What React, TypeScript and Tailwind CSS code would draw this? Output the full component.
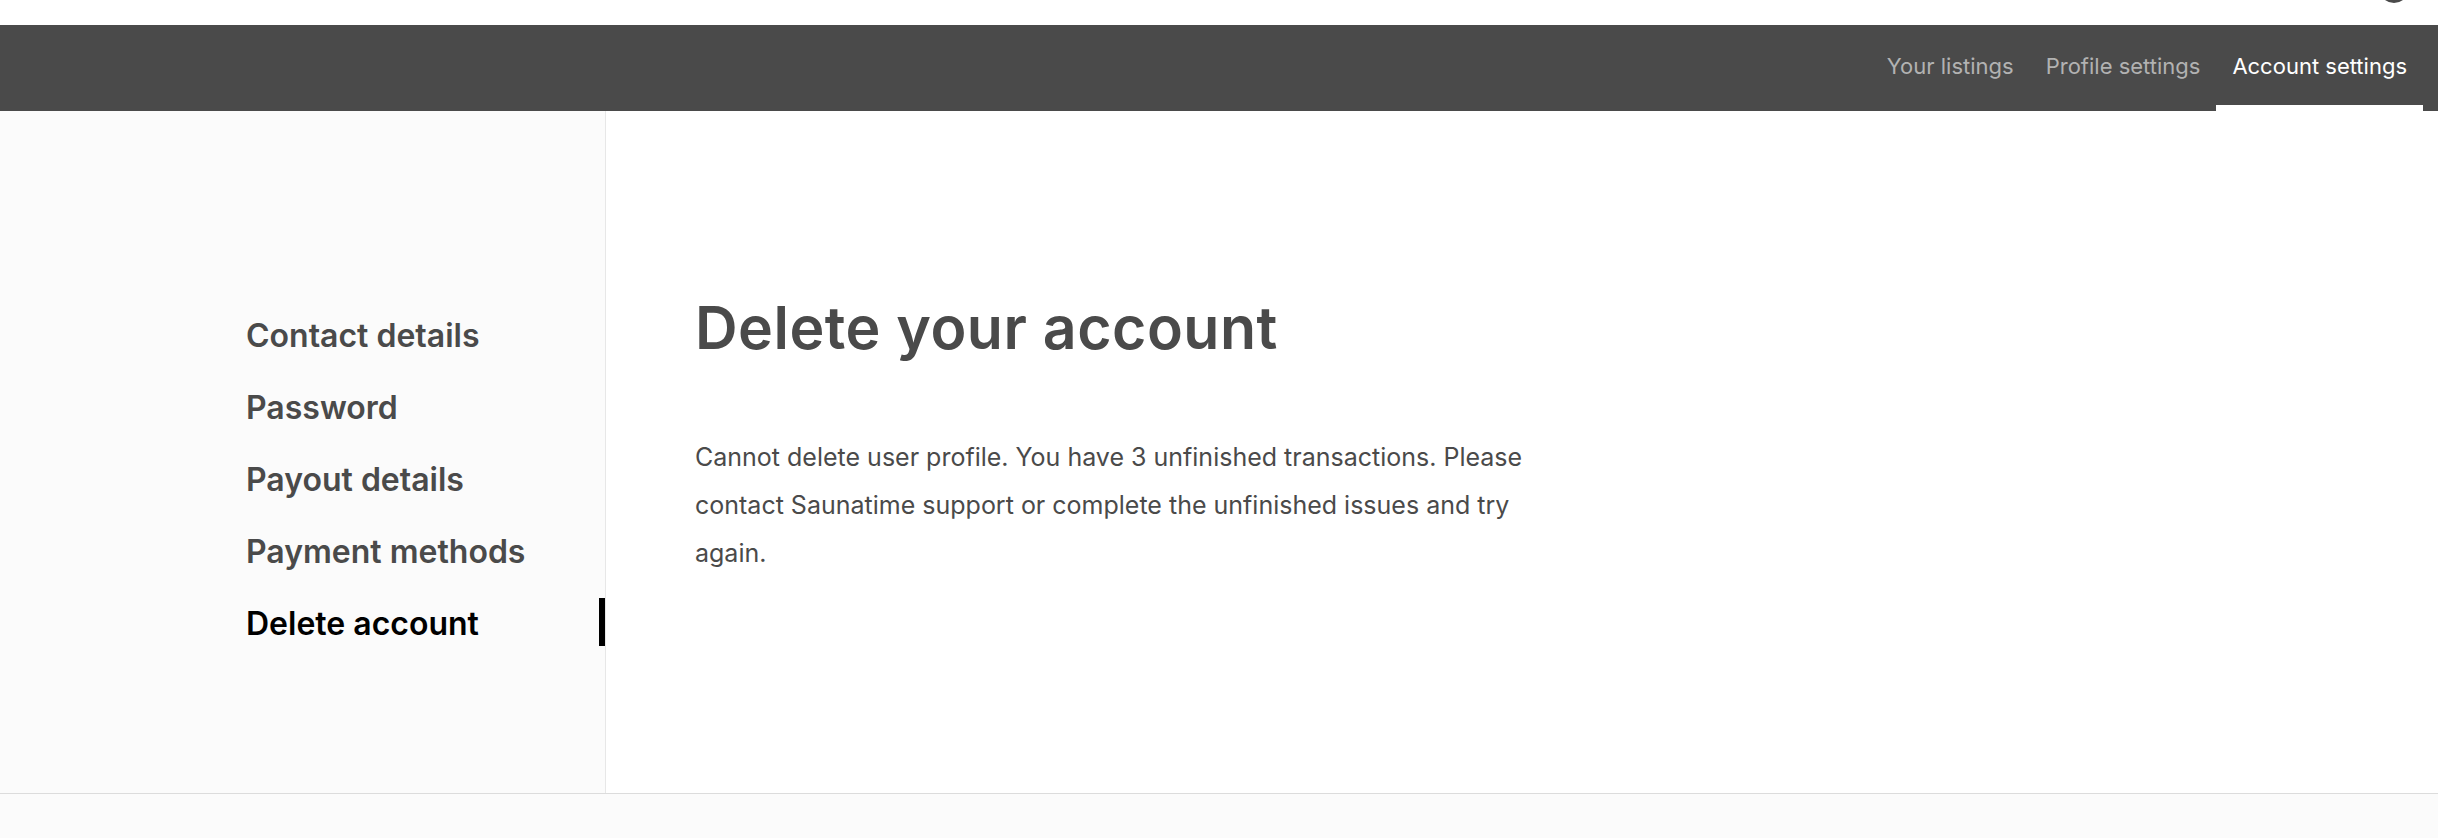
import React from "react";

const tabs = [
  { label: "Your listings", active: false },
  { label: "Profile settings", active: false },
  { label: "Account settings", active: true },
];

const sideItems = [
  { label: "Contact details", active: false },
  { label: "Password", active: false },
  { label: "Payout details", active: false },
  { label: "Payment methods", active: false },
  { label: "Delete account", active: true },
];

export default function App() {
  return (
    <div className="min-h-screen bg-[#fbfbfb] font-['Inter','Noto_Sans',sans-serif] overflow-hidden">
      <div className="relative h-[25px] bg-white">
        <div className="absolute right-[29px] top-[-27px] h-[30px] w-[30px] rounded-full bg-[#4a4a4a]" />
      </div>
      <nav className="flex h-[86px] justify-end bg-[#4a4a4a] pr-[15px]">
        {tabs.map((t) => (
          <div
            key={t.label}
            className={
              t.active
                ? "relative flex items-center px-4 pb-1 text-[22px] text-white"
                : "relative flex items-center px-4 pb-1 text-[22px] text-[#b2b2b2]"
            }
          >
            {t.label}
            {t.active && <div className="absolute bottom-0 left-0 right-0 h-[6px] bg-white" />}
          </div>
        ))}
      </nav>
      <main className="flex h-[682px] bg-white">
        <aside className="flex w-[606px] shrink-0 flex-col gap-6 border-r border-[#e7e7e7] bg-[#fbfbfb] pt-[201px]">
          {sideItems.map((s) => (
            <div
              key={s.label}
              className={
                s.active
                  ? "relative flex h-12 items-center pl-[246px] text-[32px] font-semibold text-black"
                  : "relative flex h-12 items-center pl-[246px] text-[32px] font-semibold text-[#4a4a4a]"
              }
            >
              {s.label}
              {s.active && <div className="absolute right-0 top-[-2px] h-[48px] w-[6px] bg-black" />}
            </div>
          ))}
        </aside>
        <section className="flex-1 pl-[89px] pt-[187px]">
          <h1 className="text-[59px] leading-[60px] font-semibold tracking-[0.5px] text-[#4a4a4a]">
            Delete your account
          </h1>
          <p className="mt-[75px] max-w-[860px] text-[25px] leading-[48px] text-[#4a4a4a]">
            Cannot delete user profile. You have 3 unfinished transactions. Please contact Saunatime support or
            complete the unfinished issues and try again.
          </p>
        </section>
      </main>
      <footer className="h-[60px] border-t border-[#dcdcdc] bg-[#fbfbfb]" />
    </div>
  );
}
